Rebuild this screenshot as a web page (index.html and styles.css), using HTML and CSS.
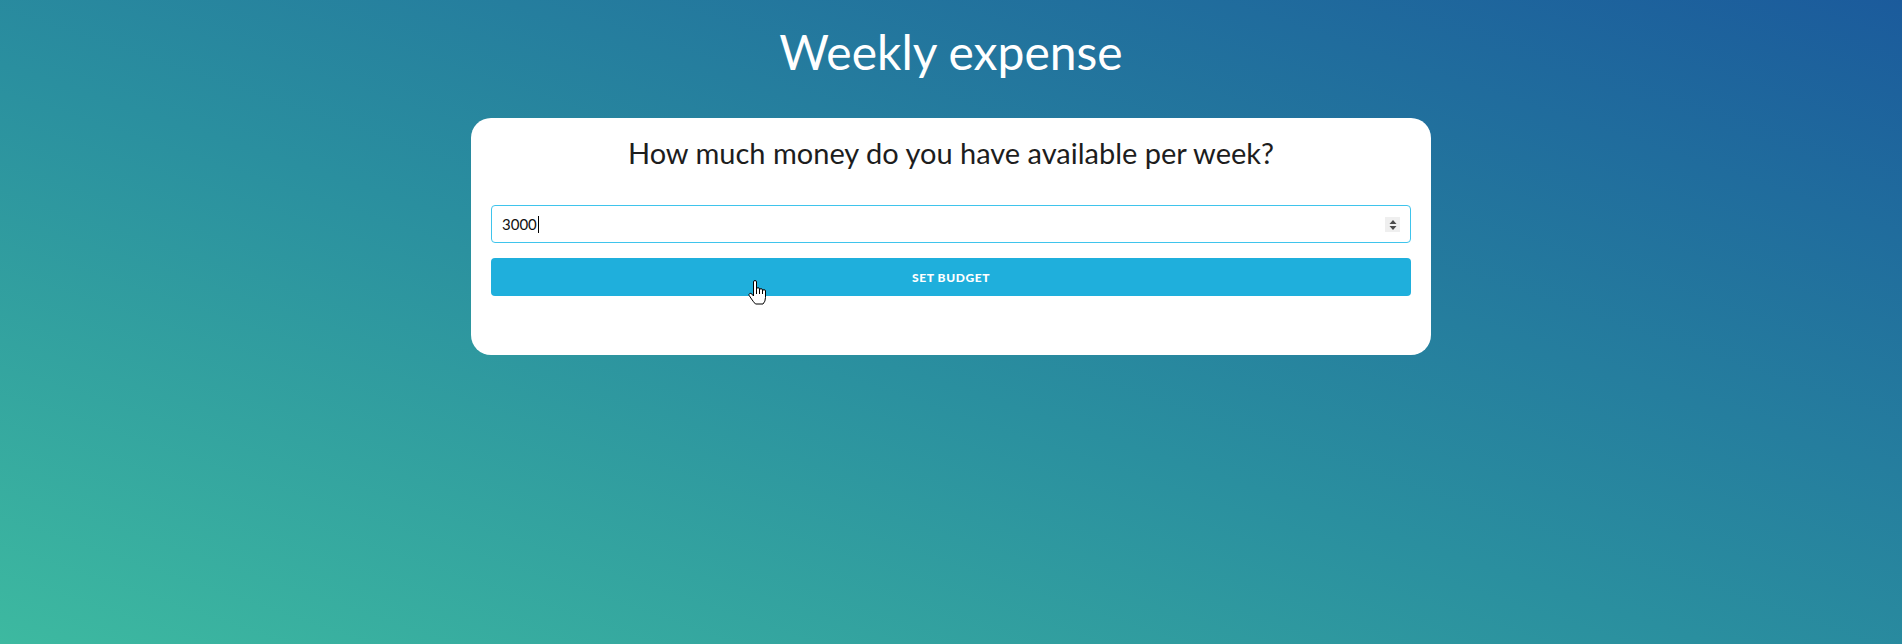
FILE: index.html
```html
<!DOCTYPE html>
<html lang="en">
<head>
<meta charset="utf-8">
<title>Weekly expense</title>
<link rel="stylesheet" href="styles.css">
</head>
<body>
<main class="page">
  <h1 class="title">Weekly expense</h1>
  <section class="card">
    <h2 class="question">How much money do you have available per week?</h2>
    <form class="budget-form">
      <div class="field">
        <input class="field-input" type="text" value="3000" aria-label="Budget">
        <span class="caret"></span>
        <span class="spinner">
          <svg width="8" height="12" viewBox="0 0 8 12"><path d="M4 1 L7.5 5 L0.5 5 Z" fill="#4a4a4a"/><path d="M0.5 7 L7.5 7 L4 11 Z" fill="#4a4a4a"/></svg>
        </span>
      </div>
      <div class="btn-wrap">
        <button class="btn" type="button">Set budget</button>
        <svg class="pointer" width="19" height="25" viewBox="0 0 19 25">
          <path d="M5.5 2 Q5.5 0.5 7 0.5 Q8.5 0.5 8.5 2 L8.5 9 Q8.5 7.7 10 7.7 Q11.5 7.7 11.5 9 L11.5 10 Q11.5 8.7 13 8.7 Q14.5 8.7 14.5 10 L14.5 11 Q14.5 9.7 16 9.7 Q17.5 9.7 17.5 11 L17.5 17.5 Q17.5 21.5 15 24 L7.5 24 Q5.5 22 3.5 19 L1.2 15.5 Q0.5 14 1.8 13.4 Q3 13 4 14.2 L5.5 16 Z" fill="#fff" stroke="#000" stroke-width="1" stroke-linejoin="round"/>
          <path d="M8.5 9 L8.5 14 M11.5 10 L11.5 14 M14.5 11 L14.5 14" stroke="#000" stroke-width="1"/>
        </svg>
      </div>
    </form>
  </section>
</main>
</body>
</html>
```
FILE: styles.css
```css
html, body {
  margin: 0;
  padding: 0;
  height: 100%;
}
body {
  font-family: Lato, "Noto Sans", sans-serif;
  background: linear-gradient(to top right, #3db9a0 0%, #2a8f9f 45%, #1b5b9c 100%);
  min-height: 644px;
}
.page {
  display: flex;
  flex-direction: column;
  align-items: center;
}
.title {
  margin: 21px 0 0;
  font-size: 48px;
  line-height: 62px;
  font-weight: 400;
  color: #fff;
}
.card {
  box-sizing: border-box;
  width: 960px;
  margin-top: 35px;
  padding: 18px 20px 59px;
  background: #fff;
  border-radius: 20px;
}
.question {
  margin: 0;
  font-size: 29px;
  line-height: 34px;
  font-weight: 400;
  color: #1d1d1d;
  text-align: center;
}
.budget-form {
  display: flex;
  flex-direction: column;
  gap: 15px;
  margin-top: 35px;
}
.field {
  position: relative;
}
.field-input {
  display: block;
  box-sizing: border-box;
  width: 100%;
  height: 38px;
  padding: 0 10px;
  border: 1px solid #3fc4ec;
  border-radius: 4px;
  font-family: Lato, "Noto Sans", sans-serif;
  font-size: 15px;
  color: #111;
  outline: none;
}
.caret {
  position: absolute;
  left: 47px;
  top: 11px;
  width: 1px;
  height: 17px;
  background: #000;
}
.spinner {
  position: absolute;
  right: 11px;
  top: 12px;
  width: 15px;
  height: 15px;
  background: #efefef;
  display: flex;
  align-items: center;
  justify-content: center;
}
.btn-wrap {
  position: relative;
}
.btn {
  display: block;
  width: 100%;
  height: 38px;
  border: none;
  border-radius: 4px;
  background: #1fafdc;
  color: #fff;
  font-family: Lato, "Noto Sans", sans-serif;
  font-size: 12px;
  font-weight: 900;
  letter-spacing: 0.6px;
  text-transform: uppercase;
}
.pointer {
  position: absolute;
  left: 257px;
  top: 22px;
}
```
